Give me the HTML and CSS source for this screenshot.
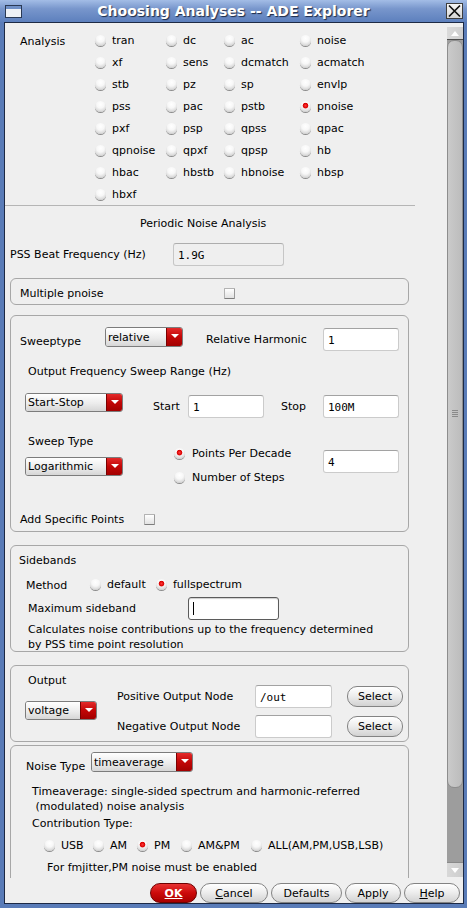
FILE: index.html
```html
<!DOCTYPE html>
<html>
<head>
<meta charset="utf-8">
<title>Choosing Analyses -- ADE Explorer</title>
<link rel="stylesheet" href="styles.css">
</head>
<body>
<div class="window">
  <div class="titlebar">
    <div class="tb-left">
      <svg class="win-icon" width="17" height="13" viewBox="0 0 17 13"><rect x="0.5" y="0.5" width="16" height="12" fill="#eef1f6" stroke="#2a3954"/><rect x="1" y="1" width="15" height="3" fill="#7090c6"/></svg>
    </div>
    <div class="title">Choosing Analyses -- ADE Explorer</div>
    <div class="tb-right">
      <div class="close"><svg width="15" height="14" viewBox="0 0 15 14"><path d="M2 1.5 L13 12.5 M13 1.5 L2 12.5" stroke="#111" stroke-width="1.7" fill="none"/></svg></div>
    </div>
  </div>

  <div class="client">
    <div class="pane">
      <div class="viewport">
        <div class="analysis">
          <div class="an-label">Analysis</div>
          <div class="an-grid">
            <div class="opt"><span class="radio"></span>tran</div>
            <div class="opt"><span class="radio"></span>dc</div>
            <div class="opt"><span class="radio"></span>ac</div>
            <div class="opt"><span class="radio"></span>noise</div>
            <div class="opt"><span class="radio"></span>xf</div>
            <div class="opt"><span class="radio"></span>sens</div>
            <div class="opt"><span class="radio"></span>dcmatch</div>
            <div class="opt"><span class="radio"></span>acmatch</div>
            <div class="opt"><span class="radio"></span>stb</div>
            <div class="opt"><span class="radio"></span>pz</div>
            <div class="opt"><span class="radio"></span>sp</div>
            <div class="opt"><span class="radio"></span>envlp</div>
            <div class="opt"><span class="radio"></span>pss</div>
            <div class="opt"><span class="radio"></span>pac</div>
            <div class="opt"><span class="radio"></span>pstb</div>
            <div class="opt"><span class="radio on"></span>pnoise</div>
            <div class="opt"><span class="radio"></span>pxf</div>
            <div class="opt"><span class="radio"></span>psp</div>
            <div class="opt"><span class="radio"></span>qpss</div>
            <div class="opt"><span class="radio"></span>qpac</div>
            <div class="opt"><span class="radio"></span>qpnoise</div>
            <div class="opt"><span class="radio"></span>qpxf</div>
            <div class="opt"><span class="radio"></span>qpsp</div>
            <div class="opt"><span class="radio"></span>hb</div>
            <div class="opt"><span class="radio"></span>hbac</div>
            <div class="opt"><span class="radio"></span>hbstb</div>
            <div class="opt"><span class="radio"></span>hbnoise</div>
            <div class="opt"><span class="radio"></span>hbsp</div>
            <div class="opt"><span class="radio"></span>hbxf</div>
          </div>
        </div>
        <div class="sep"></div>
        <div class="heading">Periodic Noise Analysis</div>

        <div class="pss-row">
          <div class="pss-label">PSS Beat Frequency (Hz)</div>
          <div class="field disabled pss-field">1.9G</div>
        </div>

        <div class="frame multi">
          <div class="multi-label">Multiple pnoise</div>
          <span class="check"></span>
        </div>

        <div class="frame sweep">
          <div class="sw-row1">
            <div class="lab sw-lab">Sweeptype</div>
            <div class="combo w78"><span class="combo-text">relative</span><span class="combo-btn"></span></div>
            <div class="lab rh-lab">Relative Harmonic</div>
            <div class="field w76 rh-field">1</div>
          </div>
          <div class="lab sw-range">Output Frequency Sweep Range (Hz)</div>
          <div class="sw-row3">
            <div class="combo w98 h19"><span class="combo-text">Start-Stop</span><span class="combo-btn"></span></div>
            <div class="lab start-lab">Start</div>
            <div class="field w76 r3-field">1</div>
            <div class="lab stop-lab">Stop</div>
            <div class="field w76 r3-field">100M</div>
          </div>
          <div class="sw-row4">
            <div class="st-col">
              <div class="lab st-lab">Sweep Type</div>
              <div class="combo w98 h19 st-combo"><span class="combo-text">Logarithmic</span><span class="combo-btn"></span></div>
            </div>
            <div class="pp-col">
              <div class="opt pp-opt"><span class="radio on"></span>Points Per Decade</div>
              <div class="opt pp-opt"><span class="radio"></span>Number of Steps</div>
            </div>
            <div class="field w76 pp-field">4</div>
          </div>
          <div class="sw-row5">
            <div class="asp-lab">Add Specific Points</div>
            <span class="check"></span>
          </div>
        </div>

        <div class="frame sidebands">
          <div class="lab sb-title">Sidebands</div>
          <div class="method-row">
            <div class="method-lab">Method</div>
            <div class="opt m-default"><span class="radio"></span>default</div>
            <div class="opt"><span class="radio on"></span>fullspectrum</div>
          </div>
          <div class="maxsb-row">
            <div class="maxsb-lab">Maximum sideband</div>
            <div class="field focus maxsb-field"><span class="caret"></span></div>
          </div>
          <div class="sb-para">Calculates noise contributions up to the frequency determined<br>by PSS time point resolution</div>
        </div>

        <div class="frame output">
          <div class="out-col">
            <div class="lab out-lab">Output</div>
            <div class="combo w72 h19 out-combo"><span class="combo-text">voltage</span><span class="combo-btn"></span></div>
          </div>
          <div class="out-grid">
            <div class="node-lab">Positive Output Node</div>
            <div class="field node-field">/out</div>
            <div class="btn sel-btn">Select</div>
            <div class="node-lab">Negative Output Node</div>
            <div class="field node-field"></div>
            <div class="btn sel-btn">Select</div>
          </div>
        </div>

        <div class="frame noise">
          <div class="nt-row">
            <div class="lab nt-lab">Noise Type</div>
            <div class="combo w102"><span class="combo-text">timeaverage</span><span class="combo-btn"></span></div>
          </div>
          <div class="nt-desc">
            <div>Timeaverage: single-sided spectrum and harmonic-referred</div>
            <div class="pre"> (modulated) noise analysis</div>
          </div>
          <div class="lab ct-lab">Contribution Type:</div>
          <div class="ct-row">
            <div class="opt ct-usb"><span class="radio"></span>USB</div>
            <div class="opt ct-am"><span class="radio"></span>AM</div>
            <div class="opt ct-pm"><span class="radio on"></span>PM</div>
            <div class="opt ct-ampm"><span class="radio"></span>AM&amp;PM</div>
            <div class="opt"><span class="radio"></span>ALL(AM,PM,USB,LSB)</div>
          </div>
          <div class="lab fm-lab">For fmjitter,PM noise must be enabled</div>
        </div>
      </div>

      <div class="vscroll">
        <div class="sb-up"><span class="tri-up"></span></div>
        <div class="sb-body">
          <div class="sb-thumb"><span class="grip"></span></div>
        </div>
        <div class="sb-down"><span class="tri-down"></span></div>
      </div>
    </div>

    <div class="buttonbar">
      <div class="btn ok"><u>OK</u></div>
      <div class="btn cancel"><u>C</u>ancel</div>
      <div class="btn defaults">Defaults</div>
      <div class="btn apply">Apply</div>
      <div class="btn help"><u>H</u>elp</div>
    </div>
  </div>
</div>
</body>
</html>
```

FILE: styles.css
```css
* { box-sizing: border-box; }
html, body { margin: 0; padding: 0; }
body {
  width: 467px; height: 908px; overflow: hidden;
  font-family: "DejaVu Sans", "Liberation Sans", sans-serif;
  font-size: 11px; color: #000;
  background: #5679b6;
}
.window {
  width: 467px; height: 908px;
  display: flex; flex-direction: column;
  background: #5a7cb8;
}

/* title bar */
.titlebar {
  height: 22px; flex: none;
  display: grid; grid-template-columns: 1fr auto 1fr; align-items: center;
  background: linear-gradient(#a3bde6, #7896cc 40%, #5d80bd 100%);
}
.tb-left { padding-left: 5px; display: flex; align-items: center; }
.win-icon { display: block; }
.title {
  font-weight: bold; font-size: 14px; color: #fff; white-space: nowrap;
  text-shadow: 1px 1px 1px #1d2b47;
  line-height: 22px;
}
.tb-right { display: flex; justify-content: flex-end; padding-right: 4px; }
.close {
  width: 17px; height: 16px;
  border: 1px solid #3e3e3e;
  background: linear-gradient(#f6f6f6, #d6d6d6);
  display: flex; align-items: center; justify-content: center;
}
.close svg { display: block; }

/* client */
.client {
  flex: 1;
  margin: 0 3px 4px 4px;
  border: 1px solid #1d2a45;
  background: #efefef;
  display: flex; flex-direction: column;
}
.pane { height: 855px; flex: none; display: flex; }
.viewport { width: 442px; flex: none; overflow: hidden; }

/* scrollbar */
.vscroll {
  width: 16px; flex: none;
  display: flex; flex-direction: column;
  padding: 4px 0 1px 0;
}
.sb-up {
  height: 13px; flex: none;
  background: linear-gradient(90deg, #dadada, #cfcfcf);
  border-bottom: 1px solid #4f4f4f;
  display: flex; align-items: center; justify-content: center;
}
.tri-up { width: 0; height: 0; border-left: 4px solid transparent; border-right: 4px solid transparent; border-bottom: 5px solid #fff; }
.sb-body { flex: 1; background: #9d9d9d; display: flex; flex-direction: column; }
.sb-thumb {
  height: 748px; flex: none;
  background: linear-gradient(90deg, #cacaca, #bcbcbc);
  border: 1px solid #8d8d8d;
  border-radius: 7px;
  display: flex; align-items: center; justify-content: center;
}
.grip {
  width: 6px; height: 8px;
  background: repeating-linear-gradient(#8a8a8a 0 1px, transparent 1px 2px);
}
.sb-down {
  height: 15px; flex: none;
  background: linear-gradient(90deg, #d8d8d8, #cdcdcd);
  border-top: 1px solid #8a8a8a;
  display: flex; align-items: center; justify-content: center;
}
.tri-down { width: 0; height: 0; border-left: 4px solid transparent; border-right: 4px solid transparent; border-top: 5px solid #fff; }

/* generic widgets */
.lab { line-height: 14px; white-space: nowrap; }
.opt { display: flex; align-items: center; gap: 6px; white-space: nowrap; }
.radio {
  flex: none; width: 11px; height: 11px; border-radius: 50%;
  background: radial-gradient(circle at 50% 30%, #ffffff 0, #f7f7f7 40%, #dcdcdc 70%, #a9a9a9 100%);
  box-shadow: 0 1px 0 #8e8e8e;
}
.radio.on {
  background:
    radial-gradient(circle at 50% 42%, #ff3a3a 0, #d80000 2.4px, rgba(216,0,0,0) 3.2px),
    radial-gradient(circle at 50% 30%, #ffffff 0, #f7f7f7 40%, #dcdcdc 70%, #a9a9a9 100%);
}
.check {
  flex: none; width: 11px; height: 11px;
  background: linear-gradient(#ffffff, #e2e2e2);
  border: 1px solid #b3b3b3;
  border-bottom-color: #7d7d7d; border-right-color: #9a9a9a;
  border-radius: 1px;
}
.field {
  height: 23px; flex: none;
  background: #fff;
  border: 1px solid #cbcbcb; border-top-color: #a2a2a2;
  border-radius: 3px;
  font-family: "DejaVu Sans Mono", "Liberation Mono", monospace;
  font-size: 11px;
  padding: 2px 0 0 4px;
  display: flex; align-items: center;
}
.field.disabled { background: #efefef; border-color: #c6c6c6; border-top-color: #adadad; }
.field.focus { border: 1px solid #5b5b5b; box-shadow: inset 0 1px 1px rgba(0,0,0,.2); padding: 0 0 0 4px; }
.caret { width: 1px; height: 13px; background: #000; }
.w76 { width: 76px; }
.w72 { width: 72px; }
.w78 { width: 78px; }
.w98 { width: 98px; }
.w102 { width: 102px; }

.combo {
  flex: none; height: 20px;
  display: flex;
  border: 1px solid #7c7c7c;
  border-radius: 3px;
  overflow: hidden;
}
.combo.h19 { height: 19px; }
.combo-text {
  flex: 1;
  background: linear-gradient(#ffffff, #ececec 55%, #d6d6d6);
  padding-left: 2px;
  display: flex; align-items: center;
  white-space: nowrap;
}
.combo-btn {
  width: 16px; flex: none;
  background: linear-gradient(#e42a2a, #c20606 50%, #a20000);
  border-left: 1px solid #7a0000;
  display: flex; justify-content: center; padding-top: 6px;
}
.combo-btn::after {
  content: ""; width: 0; height: 0;
  border-left: 4px solid transparent; border-right: 4px solid transparent;
  border-top: 4px solid #fff;
}

.btn {
  height: 20px; flex: none;
  border: 1px solid #838383;
  border-radius: 10px;
  background: linear-gradient(#ffffff, #eeeeee 45%, #d2d2d2);
  display: flex; align-items: center; justify-content: center;
  white-space: nowrap;
}

.frame {
  margin-left: 5px; width: 399px; flex: none;
  border: 1px solid #a7a7a7;
  border-radius: 6px;
}

/* analysis */
.analysis { display: flex; padding-top: 6px; }
.an-label { margin-left: 15px; width: 75px; flex: none; line-height: 22px; padding-top: 2px; }
.an-grid {
  display: grid;
  grid-template-columns: 71px 58px 76px 1fr;
  grid-auto-rows: 22px;
}
.sep { width: 410px; height: 1px; background: #b5b5b5; }
.heading { margin-top: 10px; line-height: 16px; padding-left: 135px; }

.pss-row { margin-top: 11px; display: flex; align-items: center; height: 23px; }
.pss-label { padding-left: 5px; width: 168px; flex: none; }
.pss-field { width: 111px; }

.multi {
  margin-top: 12px; height: 27px;
  display: flex; align-items: center;
  padding-top: 4px;
}
.multi-label { margin-left: 9px; width: 204px; flex: none; }

/* sweep */
.sweep { margin-top: 10px; height: 217px; }
.sw-row1 { display: flex; align-items: flex-start; padding-top: 11px; }
.sw-lab { margin-left: 9px; width: 85px; flex: none; margin-top: 8px; }
.rh-lab { margin-left: 23px; width: 117px; flex: none; margin-top: 6px; }
.rh-field { margin-top: 1px; }
.sw-range { margin-top: 14px; padding-left: 17px; }
.sw-row3 { display: flex; align-items: flex-start; margin-top: 14px; }
.sw-row3 .combo { margin-left: 14px; }
.start-lab { margin-left: 30px; width: 35px; flex: none; margin-top: 7px; }
.stop-lab { margin-left: 17px; width: 42px; flex: none; margin-top: 7px; }
.r3-field { margin-top: 2px; }
.sw-row4 { display: flex; align-items: flex-start; margin-top: 17px; height: 50px; }
.st-col { margin-left: 14px; width: 98px; flex: none; display: flex; flex-direction: column; }
.st-lab { padding-left: 3px; }
.st-combo { margin-top: 8px; }
.pp-col { margin-left: 51px; width: 149px; flex: none; display: flex; flex-direction: column; gap: 8px; padding-top: 10px; }
.pp-opt { height: 16px; gap: 7px; }
.pp-field { margin-top: 15px; }
.sw-row5 { display: flex; align-items: center; margin-top: 27px; height: 14px; }
.asp-lab { margin-left: 9px; width: 124px; flex: none; }

/* sidebands */
.sidebands { margin-top: 13px; height: 107px; }
.sb-title { padding-top: 8px; margin-left: 8px; box-sizing: content-box; }
.method-row { display: flex; align-items: center; margin-top: 9px; height: 14px; }
.method-lab { margin-left: 15px; width: 64px; flex: none; padding-top: 2px; }
.m-default { width: 66px; flex: none; }
.maxsb-row { display: flex; align-items: center; margin-top: 6px; height: 23px; }
.maxsb-lab { margin-left: 17px; width: 160px; flex: none; }
.maxsb-field { width: 91px; }
.sb-para { margin-top: 2px; margin-left: 17px; line-height: 15px; }

/* output */
.output { margin-top: 13px; height: 77px; display: flex; align-items: flex-start; }
.out-col { margin-left: 14px; width: 92px; flex: none; display: flex; flex-direction: column; }
.out-lab { padding-left: 3px; padding-top: 8px; box-sizing: content-box; }
.out-combo { margin-top: 13px; }
.out-grid {
  flex: none;
  margin-top: 19px;
  display: grid;
  grid-template-columns: 138px 92px 56px;
  row-gap: 7px;
  grid-template-rows: 23px 23px;
  align-items: center;
}
.node-lab { white-space: nowrap; }
.node-field { width: 77px; }
.sel-btn { height: 21px; width: 56px; }

/* noise */
.noise { margin-top: 3px; height: 200px; }
.nt-row { display: flex; align-items: flex-start; padding-top: 6px; }
.nt-lab { margin-left: 15px; width: 65px; flex: none; margin-top: 8px; }
.nt-desc { margin-top: 10px; margin-left: 21px; line-height: 15px; }
.pre { white-space: pre; }
.ct-lab { margin-top: 3px; margin-left: 21px; }
.ct-row { display: flex; align-items: center; margin-top: 7px; height: 14px; margin-left: 33px; }
.ct-usb { width: 49px; flex: none; }
.ct-am { width: 44px; flex: none; }
.ct-pm { width: 44px; flex: none; }
.ct-ampm { width: 70px; flex: none; }
.fm-lab { margin-top: 9px; margin-left: 36px; }

/* button bar */
.buttonbar {
  height: 25px; flex: none;
  display: flex; justify-content: flex-end;
  gap: 3px;
  padding: 5px 3px 0 0;
}
.ok {
  width: 47px;
  background: linear-gradient(#e83232, #cc0a0a 50%, #a80000);
  border-color: #6e0000;
  color: #fff; font-weight: bold;
}
.cancel { width: 68px; }
.defaults { width: 71px; }
.apply { width: 56px; }
.help { width: 56px; }
```
